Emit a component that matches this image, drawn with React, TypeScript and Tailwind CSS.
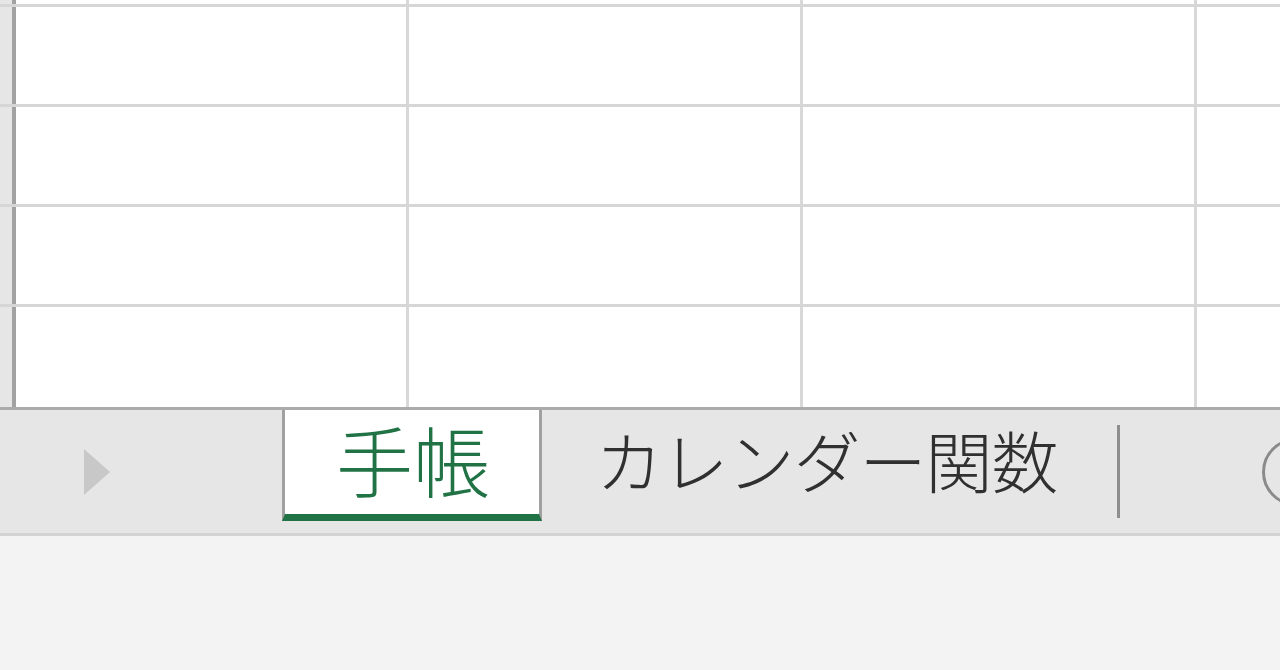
import React from 'react';

const JP = { fontFamily: '"Noto Sans CJK JP", "Noto Sans", sans-serif' };

// column widths measured from the grid lines (incl. 3px right border)
const COLS = ['w-[393px]', 'w-[394px]', 'w-[394px]', 'flex-1'];

function Row({ h, last }: { h: string; last?: boolean }) {
  return (
    <div className={`flex ${h} ${last ? '' : 'border-b-[3px] border-[#d6d6d6]'}`}>
      <div className={`w-[16px] shrink-0 bg-[#e6e6e6] border-r-[4px] border-[#a2a2a2]`} />
      {COLS.map((c, i) => (
        <div
          key={i}
          className={`${c} shrink-0 bg-white ${i < 3 ? 'border-r-[3px] border-[#d8d8d8]' : ''}`}
        />
      ))}
    </div>
  );
}

export default function App() {
  return (
    <div className="w-[1280px] h-[670px] overflow-hidden flex flex-col bg-[#f3f3f3]" style={JP}>
      {/* Sheet grid */}
      <div className="flex flex-col border-b-[3px] border-[#ababab]">
        <Row h="h-[7px]" />
        <Row h="h-[100px]" />
        <Row h="h-[100px]" />
        <Row h="h-[100px]" />
        <Row h="h-[100px]" last />
      </div>

      {/* Sheet tabs */}
      <div className="flex h-[126px] bg-[#e6e6e6] border-b-[3px] border-[#d2d2d2]">
        <div className="w-[282px] shrink-0 flex items-center pl-[84px]">
          <svg width="26" height="46" viewBox="0 0 26 46">
            <polygon points="0,0 26,23 0,46" fill="#c8c8c8" />
          </svg>
        </div>

        <div className="w-[260px] shrink-0 h-[111px] bg-white border-x-[3px] border-[#a0a0a0] border-b-[7px] border-b-[#217346] flex items-center justify-center">
          <span className="text-[77px] leading-none font-light text-[#217346] pb-[8px] pl-[2px]">手帳</span>
        </div>

        <div className="w-[575px] shrink-0 h-[104px] flex items-center justify-center">
          <span className="text-[67px] leading-none font-light text-[#303030] tracking-[-1px] pb-[8px] pr-[6px]">カレンダー関数</span>
        </div>

        <div className="w-[3px] h-[93px] mt-[15px] bg-[#8e8e8e] shrink-0" />

        <div className="ml-[142px] self-center shrink-0 w-[68px] h-[68px] rounded-full border-[3px] border-[#8a8a8a]" />
      </div>

      {/* Status area */}
      <div className="flex-1 bg-[#f3f3f3]" />
    </div>
  );
}
